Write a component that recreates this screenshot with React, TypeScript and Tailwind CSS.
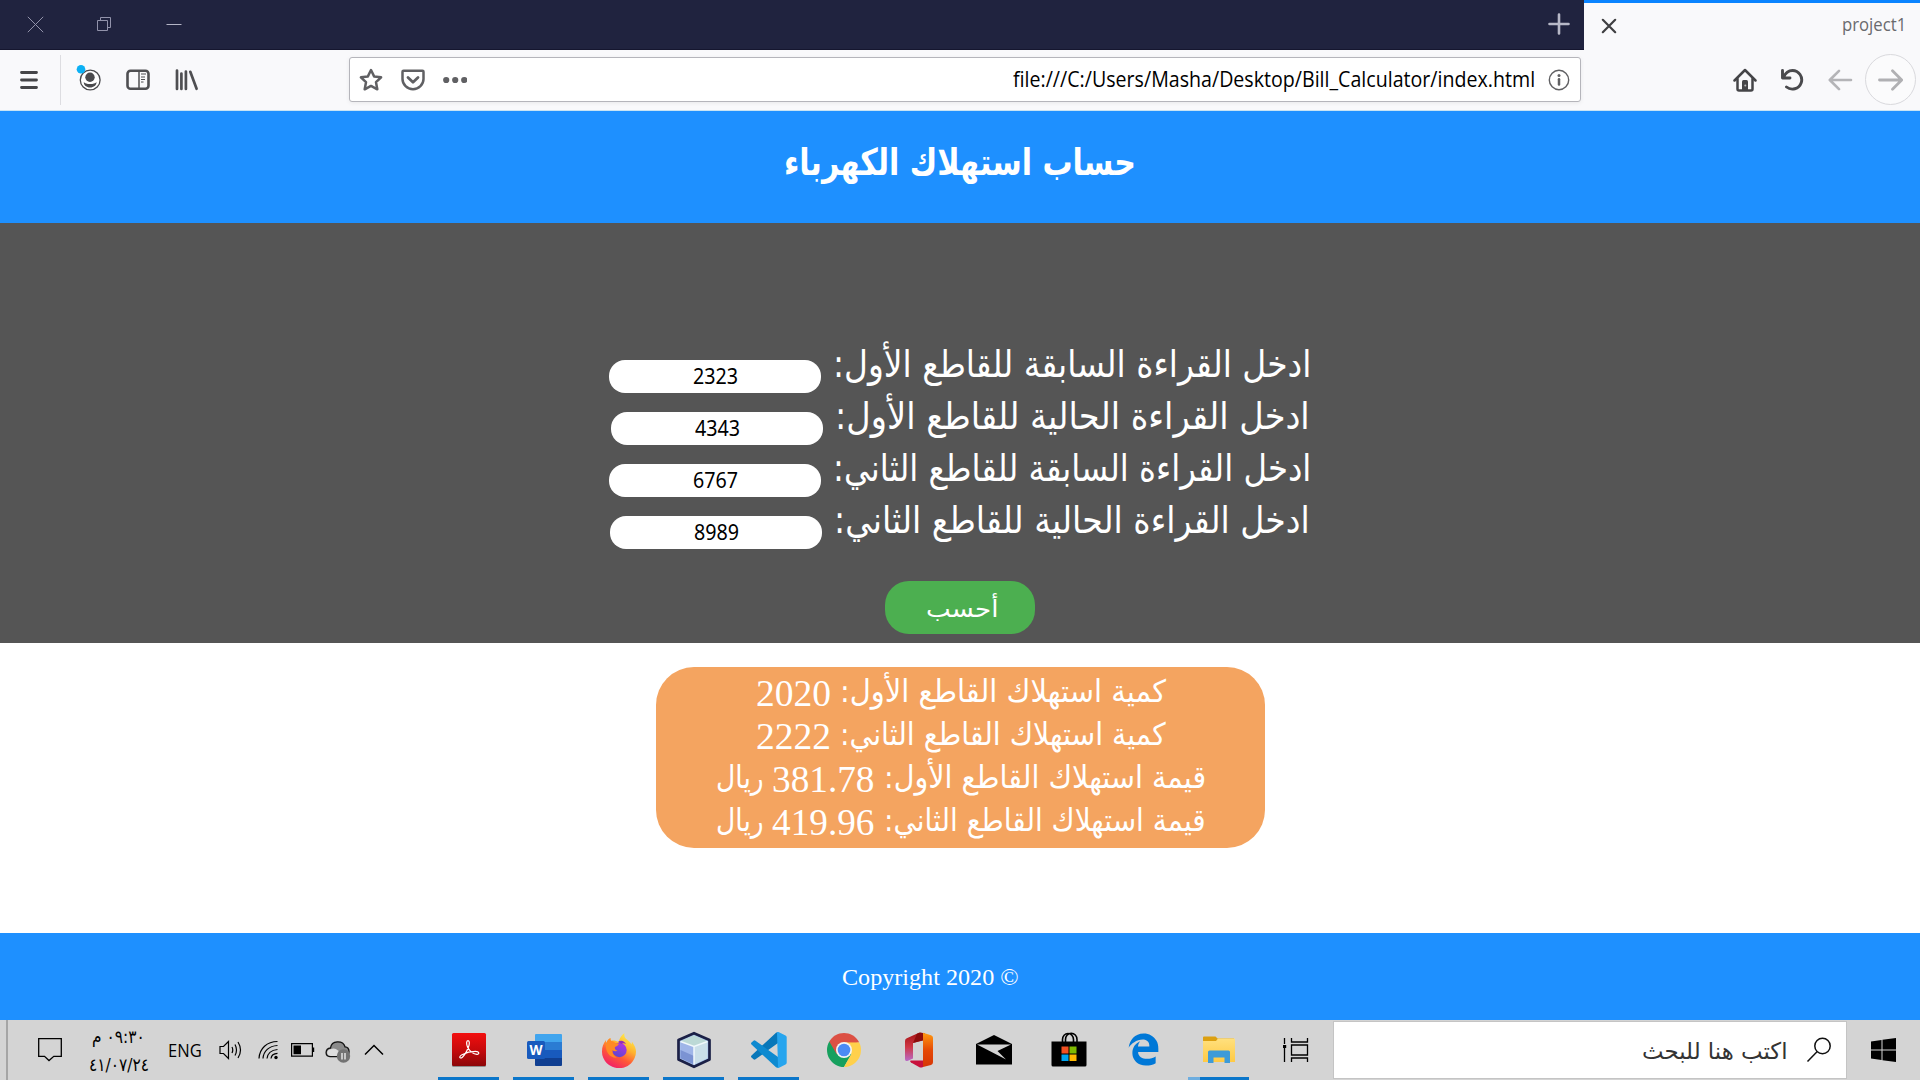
import React, { useLayoutEffect, useRef, useState } from "react";
import { FaEdgeLegacy } from "react-icons/fa6";

/** One line of text stretched horizontally to the width of its box. */
function FitText({ className, children, rtl = false }: { className: string; children: React.ReactNode; rtl?: boolean }) {
  const outer = useRef<HTMLDivElement>(null);
  const inner = useRef<HTMLSpanElement>(null);
  const [scale, setScale] = useState(1);
  useLayoutEffect(() => {
    if (outer.current && inner.current) {
      setScale(outer.current.clientWidth / inner.current.offsetWidth);
    }
  }, []);
  return (
    <div ref={outer} dir="ltr" className={"shrink-0 whitespace-nowrap " + className}>
      <span ref={inner} dir={rtl ? "rtl" : "ltr"} className="inline-block origin-left" style={{ transform: `scaleX(${scale})` }}>
        {children}
      </span>
    </div>
  );
}

function TabStrip() {
  return (
    <div className="flex h-[50px] bg-[#f9f9fb]">
      <div className="flex w-[1584px] items-center border-b border-[#15162f] bg-[#20233f]">
        <svg className="ml-[27px] -mt-px" width="17" height="17" viewBox="0 0 17 17" stroke="#9293ab" fill="none"><path d="M.8.8l15.400 15.400M16.200.8.8 16.200" /></svg>
        <svg className="ml-[53px]" width="15" height="15" viewBox="0 0 15 15" stroke="#9293ab" fill="none"><path d="M.5 3.500h10v10H.5zM3.500 3.500V.5h10v10h-3" /></svg>
        <svg className="ml-[54px] -mt-px" width="16" height="3" viewBox="0 0 16 3" stroke="#b4b5c6"><path d="M.5 1.500h15" /></svg>
        <svg className="-mt-px ml-[1366px]" width="22" height="22" viewBox="0 0 22 22" stroke="#b7b8c7" strokeWidth="2.600" strokeLinecap="round"><path d="M11 1.500v19M1.500 11h19" /></svg>
      </div>
      <div className="flex flex-1 items-center justify-between border-t-[3px] border-[#0a84ff] pr-[14px] pl-[17px]">
        <svg className="mb-px" width="16" height="16" viewBox="0 0 16 16" stroke="#3f3f42" strokeWidth="2.200" strokeLinecap="round"><path d="M1.800 1.800l12.400 12.400M14.200 1.800 1.800 14.200" /></svg>
        <FitText className="mb-[4px] w-[64px] font-['Open_Sans',sans-serif] text-[17.500px] leading-[43px] text-[#6a6a6e]">project1</FitText>
      </div>
    </div>
  );
}

function Toolbar() {
  return (
    <div className="flex h-[61px] items-center border-b border-[#c8e4f4] bg-[#f9f9fb]">
      <svg className="ml-[20px]" width="18" height="20" viewBox="0 0 18 20" stroke="#454548" strokeWidth="2.800" strokeLinecap="round"><path d="M1.500 2.500h15M1.500 10h15M1.500 17.500h15" /></svg>
      <div className="ml-[22px] h-[50px] w-px bg-[#dddde1]" />
      <svg className="ml-[14px]" width="28" height="30" viewBox="0 0 28 30">
        <circle cx="15.200" cy="15" r="9.900" fill="#fff" stroke="#4a4a4d" strokeWidth="1.300" />
        <circle cx="15" cy="12.200" r="4.700" fill="#4a4a4d" />
        <path d="M8.800 17c1.200 1.400 3.200 2 6.300 2s5.200-.6 6.400-2c.1 3.200-2.700 5.500-6.400 5.500S8.700 20.200 8.800 17z" fill="#4a4a4d" />
        <circle cx="6" cy="4.300" r="4.300" fill="#0cb0f4" />
      </svg>
      <svg className="ml-[23px]" width="24" height="22" viewBox="0 0 24 22" fill="none" stroke="#4f4f52">
        <rect x="1.500" y="1.800" width="21" height="18" rx="3" strokeWidth="2.600" />
        <path d="M13 2v18" strokeWidth="1.500" /><path d="M15 5h5M15 8h4M15 10.500h4M15 13h2.500" strokeWidth="1.200" />
      </svg>
      <svg className="ml-[25px]" width="24" height="22" viewBox="0 0 24 22" stroke="#4f4f52" strokeWidth="2.700" strokeLinecap="round"><path d="M2 1.600v18.400M6.400 4.600V20M10.900 2.600V20M15.300 2.800l6.300 17" /></svg>
      <div className="mb-px ml-[150px] flex h-[45px] w-[1232px] items-center rounded-[3px] border border-[#b5b5bb] bg-white shadow-[0_1px_4px_rgba(0,0,0,0.07)]">
        <svg className="ml-[9px]" width="24" height="24" viewBox="0 0 24 24" fill="none" stroke="#606063" strokeWidth="2.500" strokeLinejoin="round"><path d="M12 2l3.100 6.400 7 .9-5.100 4.900 1.300 7.100L12 17.900l-6.300 3.400L7 14.200 1.900 9.300l7-.9z" /></svg>
        <svg className="ml-[18px]" width="24" height="22" viewBox="0 0 24 22" fill="none" stroke="#606063" strokeWidth="2.500" strokeLinecap="round" strokeLinejoin="round"><path d="M2.500 1.800h19q1 0 1 1v7.200a10.500 10.200 0 0 1-21 0V2.800q0-1 1-1z" /><path d="M7 8.500l5 4.700 5-4.700" strokeWidth="2.800" /></svg>
        <svg className="ml-[18px]" width="24" height="8" viewBox="0 0 24 8" fill="#606063"><circle cx="3.200" cy="4" r="3.100" /><circle cx="12.200" cy="4" r="3.100" /><circle cx="21.200" cy="4" r="3.100" /></svg>
        <FitText className="ml-[546px] w-[522px] font-['Open_Sans',sans-serif] text-[21px] leading-[43px] text-black">file:///C:/Users/Masha/Desktop/Bill_Calculator/index.html</FitText>
        <svg className="ml-[13px]" width="22" height="22" viewBox="0 0 22 22" fill="none" stroke="#606063"><circle cx="11" cy="11" r="9.700" strokeWidth="1.400" /><path d="M11 10.200v5.300" strokeWidth="2.500" strokeLinecap="round" /><circle cx="11" cy="6.400" r="1.500" fill="#606063" stroke="none" /></svg>
      </div>
      <svg className="ml-[152px]" width="24" height="24" viewBox="0 0 24 24" fill="none" stroke="#454548" strokeWidth="2.500" strokeLinecap="round" strokeLinejoin="round"><path d="M1.500 12.500L12 2l10.500 10.500" /><path d="M4.500 11v10q0 1.500 1.500 1.500h12q1.500 0 1.500-1.500V11" /><path d="M9 13.500q0-1.500 1.500-1.500h3q1.500 0 1.500 1.500v8.500H9z" fill="#454548" stroke="none" /><circle cx="12.300" cy="17.500" r="1" fill="#bbb" stroke="none" /></svg>
      <svg className="ml-[23px]" width="24" height="24" viewBox="0 0 24 24" fill="none" stroke="#4a4a4d" strokeWidth="2.900" strokeLinecap="round" strokeLinejoin="round"><path d="M2.500 2.500v7.500h7.500M3.500 9.300C5.500 4.800 9 2.500 12.500 2.500A9.300 9.300 0 1 1 6.500 19" /></svg>
      <svg className="ml-[24px]" width="25" height="22" viewBox="0 0 25 22" fill="none" stroke="#b4b4b7" strokeWidth="2.600" strokeLinecap="round" strokeLinejoin="round"><path d="M23 11H2.500M11 1.800L1.800 11l9.200 9.200" /></svg>
      <div className="mb-px ml-[12px] flex h-[51px] w-[51px] items-center justify-center rounded-full border border-[#d9d9dd] bg-[#fbfbfc]">
        <svg width="25" height="22" viewBox="0 0 25 22" fill="none" stroke="#b0b0b3" strokeWidth="2.800" strokeLinecap="round" strokeLinejoin="round"><path d="M1.500 11h21.500M14.500 1.800l9.200 9.200-9.200 9.200" /></svg>
      </div>
    </div>
  );
}

const readings = [
  { label: "ادخل القراءة السابقة للقاطع الأول:", value: "2323", box: "pl-[609px]", gap: "ml-[12px] w-[478px]" },
  { label: "ادخل القراءة الحالية للقاطع الأول:", value: "4343", box: "pl-[611px]", gap: "ml-[12px] w-[475px]" },
  { label: "ادخل القراءة السابقة للقاطع الثاني:", value: "6767", box: "pl-[609px]", gap: "ml-[12px] w-[478px]" },
  { label: "ادخل القراءة الحالية للقاطع الثاني:", value: "8989", box: "pl-[610px]", gap: "ml-[12px] w-[476px]" },
];

function Form() {
  return (
    <main className="h-[420px] bg-[#555555] pt-[117px]">
      {readings.map((r) => (
        <div key={r.label} className={"flex h-[52px] " + r.box}>
          <div className="mt-[20px] flex h-[33px] w-[212px] justify-center rounded-[16px] bg-white">
            <FitText className="w-[45px] font-['Noto_Sans',sans-serif] text-[21px] leading-[32px] text-black">{r.value}</FitText>
          </div>
          <FitText rtl className={"font-['DejaVu_Sans',sans-serif] text-[37px] leading-[50px] text-white " + r.gap}>{r.label}</FitText>
        </div>
      ))}
      <button className="mt-[33px] ml-[885px] flex h-[53px] w-[150px] rounded-[24px] bg-[#4caf50] pl-[38px]">
        <FitText rtl className="w-[72px] font-['DejaVu_Sans',sans-serif] text-[24px] leading-[57px] text-white">أحسب</FitText>
      </button>
    </main>
  );
}

const arabic = "font-['DejaVu_Sans',sans-serif] text-[31px] leading-[42px]";
const digits = "font-['Liberation_Serif',serif] text-[38px] leading-[43px] translate-y-[2px]";

const amounts = [
  { label: "كمية استهلاك القاطع الأول:", value: "2020" },
  { label: "كمية استهلاك القاطع الثاني:", value: "2222" },
];
const costs = [
  { label: "قيمة استهلاك القاطع الأول:", value: "381.78" },
  { label: "قيمة استهلاك القاطع الثاني:", value: "419.96" },
];

function Results() {
  return (
    <section className="flex h-[290px] justify-center bg-white pt-[24px]">
      <div className="h-[181px] w-[609px] rounded-[38px] bg-[#f4a460] pt-[3px] text-white">
        {amounts.map((r) => (
          <div key={r.label} className="flex h-[43px] pl-[100px]">
            <FitText className={"w-[75px] " + digits}>{r.value}</FitText>
            <FitText rtl className={"ml-[9px] w-[326px] " + arabic}>{r.label}</FitText>
          </div>
        ))}
        {costs.map((r) => (
          <div key={r.label} className="flex h-[43px] pl-[60px]">
            <FitText rtl className={"w-[48px] " + arabic}>ريال</FitText>
            <FitText className={"ml-[8px] w-[103px] " + digits}>{r.value}</FitText>
            <FitText rtl className={"ml-[9px] w-[322px] " + arabic}>{r.label}</FitText>
          </div>
        ))}
      </div>
    </section>
  );
}

function Acrobat() {
  return (
    <svg width="36" height="36" viewBox="0 0 36 36">
      <defs><linearGradient id="acro" x1="0" y1="0" x2="0" y2="1"><stop offset="0" stopColor="#f20f0f" /><stop offset=".5" stopColor="#c80a0c" /><stop offset="1" stopColor="#8c0608" /></linearGradient></defs>
      <rect x="1" y="2" width="34" height="33" rx="1.500" fill="#8f8f8f" /><rect x="1" y="1" width="34" height="33" rx="1.500" fill="url(#acro)" />
      <path d="M16.700 15.500c-1.500-3.500-1.500-6.800.3-6.800s1.700 3.300.3 6.800c-1.900 5-5.500 10.500-7.500 10.500-1.500 0-1.500-1.900 1.200-3.300 4.200-2.200 9.600-3.400 13.400-3.400 4.200 0 4.200 3.200 1.500 3-3.300-.2-7-3.100-9.200-6.800z" fill="none" stroke="#fff" strokeWidth="1.200" />
    </svg>
  );
}

function Word() {
  return (
    <svg width="36" height="36" viewBox="0 0 36 36">
      <path d="M9 3q0-1 1-1h25q1 0 1 1v8H9z" fill="#41a5ee" /><path d="M9 10h27v8H9z" fill="#2b7cd3" /><path d="M9 18h27v8H9z" fill="#185abd" /><path d="M9 26h27v7q0 1-1 1H10q-1 0-1-1z" fill="#103f91" />
      <rect x="1" y="9" width="18" height="18" rx="1.500" fill="#185abd" />
      <text x="10" y="23" fontSize="13.500" fontWeight="700" fill="#fff" textAnchor="middle" fontFamily="Open Sans, sans-serif">W</text>
    </svg>
  );
}

function Firefox() {
  return (
    <svg width="36" height="36" viewBox="0 0 36 36">
      <defs>
        <linearGradient id="ff" x1=".8" y1="0" x2=".25" y2="1"><stop offset="0" stopColor="#fff44f" /><stop offset=".38" stopColor="#ffb22e" /><stop offset=".65" stopColor="#ff5a36" /><stop offset="1" stopColor="#f0196e" /></linearGradient>
        <linearGradient id="ffp" x1=".8" y1="0" x2=".3" y2="1"><stop offset="0" stopColor="#b833e1" /><stop offset="1" stopColor="#5a48d0" /></linearGradient>
      </defs>
      <path d="M23.500 1c-.8 3 .3 5 2.700 6.800 2 1.600 3.400 2.900 4.300 4.800l.5-2.800c3 4 4 7.500 4 10A17 16.500 0 0 1 1 19.500c0-4.500 1.200-8 4-11.500v3.300C6.500 8.500 8 7 9.500 6c-.2 1.200 0 2 .5 2.700 3-.5 6 .3 7.500 1.300 1.300-4 3-7 6-9z" fill="url(#ff)" />
      <circle cx="18.500" cy="18" r="7.200" fill="url(#ffp)" />
      <path d="M5 11.500c1-3 3-5 4.500-5.500-.3 1.300 0 2 .6 2.900 2.200.2 3.300 1 4.300 2.200l3.500.6c-.5 1.700-2.300 2.700-4 3.400-.4 2.300.8 3.400 2.700 3.700-2 .8-4 .2-5.400-.6-.2 3 1.700 6 4.800 7.500C8 26 4 19 5 11.500z" fill="#ff8a24" />
      <path d="M17 10c3-2.500 6.500-.8 8 2-2-1-3.500-.8-4.500 0z" fill="#952bb9" />
    </svg>
  );
}

function NetBeans() {
  return (
    <svg width="36" height="38" viewBox="0 0 36 38">
      <path d="M18 2.200L33.500 9v19.500L18 35.800 2.500 28.500V9z" fill="#a9c3ec" stroke="#1b2046" strokeWidth="2.700" strokeLinejoin="round" />
      <path d="M4.500 10.500L18 15.500v18L4.500 27.300z" fill="#9fb5e8" /><path d="M4.500 19L18 25v8.500L4.500 27.300z" fill="#7b93d3" />
      <path d="M31.500 10.500L18 15.500v18l13.500-6.200z" fill="#cadfe9" /><path d="M18 4.300l13.500 6L18 15.500l-13.500-5.200z" fill="#bcd9d6" />
      <path d="M4.500 10.500L18 15.500l13.500-5M18 15.500v18" fill="none" stroke="#f0f8fb" strokeWidth="1.500" />
    </svg>
  );
}

function VsCode() {
  return (
    <svg width="37" height="36" viewBox="0 0 37 36">
      <path d="M28 11L5.500 27.300q-1 .8-2 0l-2-1.800q-1-1 0-2L26 .7q1-.7 2.500-.7z" fill="#0877b9" />
      <path d="M28 25L5.500 8.700q-1-.8-2 0l-2 1.800q-1 1 0 2L26 35.300q1 .7 2.500.7z" fill="#0e8ad0" />
      <path d="M27 .2q1-.4 2 .1l6.500 3.200q1.200.6 1.200 1.800v25.400q0 1.200-1.200 1.800L29 35.700q-1 .5-2 .1l1-1z" fill="#27a5ee" />
    </svg>
  );
}

function Chrome() {
  return (
    <svg width="34" height="34" viewBox="0 0 34 34">
      <path d="M17 17L2.280 8.500A17 17 0 0 1 31.720 8.500z" fill="#dc5044" /><path d="M2.280 8.500A17 17 0 0 0 17 34l7.500-13L17 17z" fill="#17a05e" />
      <path d="M31.720 8.500A17 17 0 0 1 17 34l7.400-13L17 9.200h15z" fill="#ffd04b" /><path d="M2.280 8.500L9.600 21 17 9.200h15l-.3-.7z" fill="#dc5044" />
      <circle cx="17" cy="17" r="8" fill="#f4f4f4" /><circle cx="17" cy="17" r="6.300" fill="#4c8bf5" />
    </svg>
  );
}

function Office() {
  return (
    <svg width="28" height="36" viewBox="0 0 28 36">
      <defs><linearGradient id="offl" x1="0" y1="0" x2="0" y2="1"><stop offset="0" stopColor="#a51212" /><stop offset=".5" stopColor="#cf3846" /><stop offset="1" stopColor="#b86bc9" /></linearGradient>
        <linearGradient id="offr" x1="0" y1="0" x2="0" y2="1"><stop offset="0" stopColor="#ff9a12" /><stop offset=".5" stopColor="#e64a06" /><stop offset="1" stopColor="#d63506" /></linearGradient></defs>
      <path d="M0 9q0-2 1.800-2.800L14 .8 18.500 1v7L8 11v15.500l-5 2.200Q0 30 0 27z" fill="url(#offl)" />
      <path d="M12 1.700l3-1.300 5 1v6.500L8 11z" fill="#8d0c0c" />
      <path d="M18 .8l8 2.400q2 .6 2 2.600v24.500q0 2-2 2.600L18 35z" fill="url(#offr)" />
      <path d="M5.500 28.500H18V35q-2 1-4 0l-8-4.500q-1.500-1-.5-2z" fill="#c8113c" />
    </svg>
  );
}

function Mail() {
  return (
    <svg width="36" height="30" viewBox="0 0 36 30"><path d="M0 9L18 0l18 9v20.500H0z" fill="#000" /><path d="M1 9.500h34L21.500 16l8.500 8.500L17.500 18z" fill="#d4d4d4" /></svg>
  );
}

function Store() {
  return (
    <svg width="36" height="36" viewBox="0 0 36 36">
      <path d="M11.500 10V7.500a5.500 6 0 0 1 11 0V10M14.500 10V7.500a5.500 6 0 0 1 11.500 0V10" fill="none" stroke="#000" strokeWidth="1.600" />
      <path d="M.5 9.500h35V33q0 1.500-1.500 1.500H2Q.5 34.500.5 33z" fill="#000" />
      <path d="M10.500 14.500h7v7h-7z" fill="#f25022" /><path d="M18.500 14.500h7v7h-7z" fill="#7fba00" /><path d="M10.500 22.500h7v6.500h-7z" fill="#00a4ef" /><path d="M18.500 22.500h7v6.500h-7z" fill="#ffb900" />
    </svg>
  );
}

function Explorer() {
  return (
    <svg width="34" height="28" viewBox="0 0 34 28">
      <defs><linearGradient id="fold" x1="0" y1="0" x2="0" y2="1"><stop offset="0" stopColor="#ffe07e" /><stop offset="1" stopColor="#ffca44" /></linearGradient></defs>
      <path d="M1 1.500Q1 .5 2 .5h11.500l2 2H32v8H1z" fill="#dca011" /><path d="M1 5h13l2-2.500h16q1 0 1 1V26H1z" fill="url(#fold)" />
      <path d="M6 16q0-1.500 1.500-1.500h19q1.500 0 1.500 1.500v11h-5.500v-5.500h-11V27H6z" fill="#3d9bd9" />
    </svg>
  );
}

const apps = [
  { name: "Acrobat", icon: <Acrobat />, bar: "bg-[#0b76ca]" },
  { name: "Word", icon: <Word />, bar: "bg-[#0b76ca]" },
  { name: "Firefox", icon: <Firefox />, bar: "bg-[#0b76ca]" },
  { name: "NetBeans", icon: <NetBeans />, bar: "bg-[#0b76ca]" },
  { name: "VS Code", icon: <VsCode />, bar: "bg-[#0b76ca]" },
  { name: "Chrome", icon: <Chrome />, bar: "" },
  { name: "Office", icon: <Office />, bar: "" },
  { name: "Mail", icon: <Mail />, bar: "" },
  { name: "Store", icon: <Store />, bar: "" },
  { name: "Edge", icon: <FaEdgeLegacy size={33} color="#0078d7" />, bar: "" },
  { name: "Explorer", icon: <Explorer />, bar: "bg-[#0b76ca] border-l-[12px] border-[#6eaee0]" },
];

function Taskbar() {
  return (
    <footer className="flex h-[60px] items-center bg-[#d4d4d4]">
      <div className="ml-[6px] h-full w-[2px] bg-[#a5a5a5]" />
      <svg className="ml-[30px]" width="24" height="24" viewBox="0 0 24 24" fill="none" stroke="#000" strokeWidth="1.300"><path d="M.7.700h22.600v17.600h-7.500L11 22.500l-4.500-4.200H.700z" /></svg>
      <div className="ml-[27px] flex w-[60px] flex-col pt-[2px] font-['DejaVu_Sans',sans-serif] text-[18px] text-black">
        <FitText rtl className="ml-[3px] w-[53px] leading-[28px]">٠٩:٣٠ م</FitText>
        <FitText className="w-[60px] leading-[28px]">٤١/٠٧/٢٤</FitText>
      </div>
      <FitText className="ml-[19px] w-[34px] font-['Open_Sans',sans-serif] text-[18px] leading-[60px] text-black">ENG</FitText>
      <svg className="ml-[17px]" width="24" height="20" viewBox="0 0 24 20" fill="none" stroke="#000" strokeWidth="1.200"><path d="M1 6.500h3.500L9.500 1.500v17l-5-5H1zM13 7q1.500 3 0 6M16 4.500q3 5.500 0 11M19 2q5 8 0 16" /></svg>
      <svg className="ml-[15px]" width="21" height="20" viewBox="0 0 21 20" fill="none" stroke="#000" strokeWidth="1.200"><path d="M1 18.500C1.500 8.500 9 1.500 19.500 1.500M5 18.500C5.500 11 11 6 19.500 5.500M9 18.500c.5-4.500 4-8.500 10.500-9M13 18.500c.3-2.500 2.500-5 6.500-5.200" /><circle cx="18" cy="17.500" r="1.700" fill="#000" stroke="none" /></svg>
      <svg className="ml-[12px]" width="24" height="14" viewBox="0 0 24 14"><path d="M.6.600h20.800v12.500H.6z" fill="none" stroke="#000" strokeWidth="1.200" /><path d="M2.500 2.500h7.500v8.700H2.500zM21.500 4.500h1.700v4.500h-1.700z" /></svg>
      <svg className="mt-[3px] ml-[10px]" width="26" height="22" viewBox="0 0 26 22"><path d="M5 15.500C-.5 15 0 7.500 5.500 7c1-8 12.500-8 14.500-1.200 5.500.4 5.300 9.500 0 9.700z" fill="#8b8b8b" stroke="#111" strokeWidth="1.300" /><path d="M6 8q4-1.500 7 1.500l8 5.500H5.500C1 14.500 1 8.500 6 8z" fill="#dedede" /><circle cx="18.500" cy="15" r="6.700" fill="#737373" /><path d="M17 12v6.500M20 12v6.500" stroke="#fff" strokeWidth="1.200" /></svg>
      <svg className="ml-[13px]" width="20" height="12" viewBox="0 0 20 12" fill="none" stroke="#000" strokeWidth="1.500"><path d="M1 10.500l9-9 9 9" /></svg>
      <div className="ml-[47px] flex h-full">
        {apps.map((a) => (
          <div key={a.name} aria-label={a.name} className="flex h-full w-[75px] flex-col items-center">
            <div className="flex h-[57px] items-center pt-[2px]">{a.icon}</div>
            <div className={"h-[3px] w-[61px] " + a.bar} />
          </div>
        ))}
      </div>
      <svg className="ml-[27px]" width="26" height="24" viewBox="0 0 26 24" fill="none" stroke="#000" strokeWidth="1.300"><path d="M1.500 0v6M1.500 10v14M8.500 0v4h16V0M8.500 7h16v10h-16zM8.500 24v-4h16v4" /><path d="M0 7h3.200v3H0z" fill="#000" stroke="none" /></svg>
      <div className="ml-[24px] flex h-[58px] w-[514px] items-center border border-[#c4c4c4] bg-white">
        <FitText rtl className="ml-[308px] w-[146px] pt-[3px] font-['DejaVu_Sans',sans-serif] text-[23px] leading-[53px] text-[#333]">اكتب هنا للبحث</FitText>
        <svg className="ml-[18px]" width="26" height="26" viewBox="0 0 26 26" fill="none" stroke="#111" strokeWidth="1.500"><circle cx="16.500" cy="9" r="7.700" /><path d="M11 14.800L1.500 24.500" /></svg>
      </div>
      <svg className="ml-[24px]" width="25" height="24" viewBox="0 0 25 24" fill="#000"><path d="M0 3.400l10.500-1.500v9.600H0zM11.500 1.800L25 0v11.500H11.500zM0 12.500h10.500v9.600L0 20.600zM11.500 12.500H25V24l-13.500-1.800z" /></svg>
    </footer>
  );
}

export default function App() {
  return (
    <div className="flex h-[1080px] w-[1920px] flex-col overflow-hidden bg-white">
      <TabStrip />
      <Toolbar />
      <header className="flex h-[112px] items-center justify-center bg-[#1e90ff] pb-[8px]">
        <FitText rtl className="w-[352px] font-['DejaVu_Sans',sans-serif] text-[37px] leading-[52px] font-bold text-white">حساب استهلاك الكهرباء</FitText>
      </header>
      <Form />
      <Results />
      <div className="h-[87px] bg-[#1e90ff] pl-[842px]">
        <FitText className="w-[177px] font-['Liberation_Serif',serif] text-[24px] leading-[88px] text-white">Copyright 2020 ©</FitText>
      </div>
      <Taskbar />
    </div>
  );
}
